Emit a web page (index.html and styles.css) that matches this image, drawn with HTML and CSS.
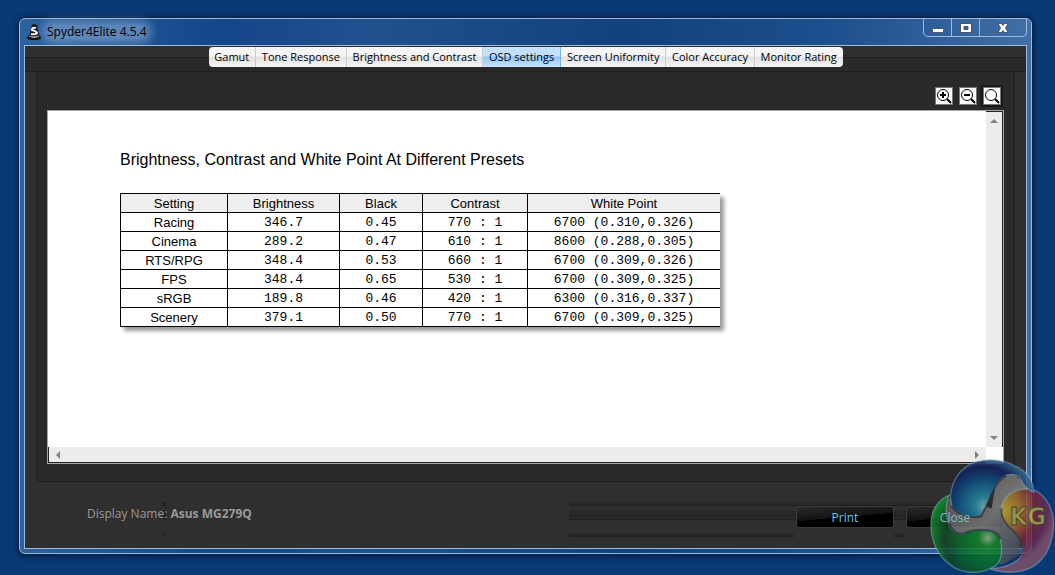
FILE: index.html
```html
<!DOCTYPE html>
<html lang="en">
<head>
  <meta charset="UTF-8">
  <meta name="viewport" content="width=device-width, initial-scale=1.0">
  <title>Spyder4Elite 4.5.4</title>
  <link rel="stylesheet" href="styles.css">
</head>
<body>
  <div class="window">
    <header class="titlebar">
      <svg class="app-icon" width="15" height="17" viewBox="0 0 15 17">
        <path d="M7 0L10 1L11 7L12 10L14 13L14 15L10 16H4L0 15L1 12L3 10L4 4L5 1Z" fill="#111"/>
        <path d="M9 4Q5 3 5 6Q9 7 10 9Q9 11 4 10" fill="none" stroke="#f4f4f4" stroke-width="2"/>
        <path d="M2 12Q7 15 12 12M5 13H10" fill="none" stroke="#b5b5b5"/>
      </svg>
      <h1 class="title">Spyder4Elite 4.5.4</h1>
      <div class="win-buttons">
        <button aria-label="Minimize">
          <svg width="12" height="12" viewBox="0 0 12 12"><rect x=".5" y="6.500" width="11" height="4" rx="1" fill="#fff" stroke="#4b5566"/></svg>
        </button>
        <button aria-label="Maximize">
          <svg width="12" height="12" viewBox="0 0 12 12"><path d="M.5 1.500H11.500V10.500H.5Z M4 4.500V7.500H8V4.500Z" fill="#fff" fill-rule="evenodd" stroke="#4b5566"/></svg>
        </button>
        <button class="win-close" aria-label="Close window">
          <svg width="12" height="12" viewBox="0 0 12 12"><path d="M1 1.500H4.500L6 3.500L7.500 1.500H11L8.500 6L11 10.500H7.500L6 8.500L4.500 10.500H1L3.500 6Z" fill="#fff" stroke="#4b5566"/></svg>
        </button>
      </div>
    </header>

    <main class="client">
      <nav class="tabbar">
        <div class="tabs">
          <button>Gamut</button>
          <button>Tone Response</button>
          <button>Brightness and Contrast</button>
          <button class="active">OSD settings</button>
          <button>Screen Uniformity</button>
          <button>Color Accuracy</button>
          <button>Monitor Rating</button>
        </div>
      </nav>

      <section class="panel">
        <div class="zoom-tools">
          <button aria-label="Zoom in">
            <svg width="16" height="16" viewBox="0 0 16 16"><circle cx="7" cy="7" r="5.500"/><path class="thick" d="M4 7H10M7 4V10M11 11L15 15"/></svg>
          </button>
          <button aria-label="Zoom out">
            <svg width="16" height="16" viewBox="0 0 16 16"><circle cx="7" cy="7" r="5.500"/><path class="thick" d="M4 7H10M11 11L15 15"/></svg>
          </button>
          <button class="focused" aria-label="Fit to view">
            <svg width="16" height="16" viewBox="0 0 16 16"><circle cx="7" cy="7" r="5.500"/><path class="thick" d="M11 11L15 15"/></svg>
          </button>
        </div>

        <div class="viewer">
          <article class="report">
            <h2>Brightness, Contrast and White Point At Different Presets</h2>
            <table>
              <colgroup>
                <col class="col-setting">
                <col class="col-brightness">
                <col class="col-black">
                <col class="col-contrast">
                <col>
              </colgroup>
              <thead>
                <tr><th>Setting</th><th>Brightness</th><th>Black</th><th>Contrast</th><th>White Point</th></tr>
              </thead>
              <tbody>
                <tr><th>Racing</th><td>346.7</td><td>0.45</td><td>770 : 1</td><td>6700 (0.310,0.326)</td></tr>
                <tr><th>Cinema</th><td>289.2</td><td>0.47</td><td>610 : 1</td><td>8600 (0.288,0.305)</td></tr>
                <tr><th>RTS/RPG</th><td>348.4</td><td>0.53</td><td>660 : 1</td><td>6700 (0.309,0.326)</td></tr>
                <tr><th>FPS</th><td>348.4</td><td>0.65</td><td>530 : 1</td><td>6700 (0.309,0.325)</td></tr>
                <tr><th>sRGB</th><td>189.8</td><td>0.46</td><td>420 : 1</td><td>6300 (0.316,0.337)</td></tr>
                <tr><th>Scenery</th><td>379.1</td><td>0.50</td><td>770 : 1</td><td>6700 (0.309,0.325)</td></tr>
              </tbody>
            </table>
          </article>
          <div class="scroll-y">
            <svg width="8" height="4" viewBox="0 0 8 4"><path d="M0 4L4 0L8 4Z"/></svg>
            <svg width="8" height="4" viewBox="0 0 8 4"><path d="M0 0L4 4L8 0Z"/></svg>
          </div>
          <div class="scroll-x">
            <svg width="4" height="8" viewBox="0 0 4 8"><path d="M4 0L0 4L4 8Z"/></svg>
            <svg width="4" height="8" viewBox="0 0 4 8"><path d="M0 0L4 4L0 8Z"/></svg>
          </div>
        </div>
      </section>

      <footer class="footer">
        <p class="display-name">Display Name: <b>Asus MG279Q</b></p>
        <div class="actions">
          <button><span>Print</span></button>
          <button><span>Close</span></button>
        </div>
      </footer>
    </main>
  </div>

  <svg class="watermark" width="130" height="120" viewBox="0 0 390 360">
    <defs>
      <radialGradient id="blue" gradientUnits="userSpaceOnUse" cx="178" cy="155" r="150">
        <stop offset="0" stop-color="#7fb4bd"/>
        <stop offset=".2" stop-color="#2787a4"/>
        <stop offset=".55" stop-color="#0c4c80"/>
        <stop offset=".8" stop-color="#14215c"/>
        <stop offset="1" stop-color="#2f628c"/>
      </radialGradient>
      <radialGradient id="green" gradientUnits="userSpaceOnUse" cx="188" cy="248" r="185">
        <stop offset="0" stop-color="#8fb593"/>
        <stop offset=".15" stop-color="#12862b"/>
        <stop offset=".45" stop-color="#086a2c"/>
        <stop offset=".7" stop-color="#114527"/>
        <stop offset="1" stop-color="#12a22e"/>
      </radialGradient>
      <radialGradient id="red" gradientUnits="userSpaceOnUse" cx="225" cy="165" r="165">
        <stop offset="0" stop-color="#c3b33b"/>
        <stop offset=".4" stop-color="#a06b30"/>
        <stop offset=".65" stop-color="#7a2438"/>
        <stop offset=".85" stop-color="#672a52"/>
        <stop offset="1" stop-color="#7e5068"/>
      </radialGradient>
      <linearGradient id="steel" x1="0" y1="0" x2="1" y2="1">
        <stop offset="0" stop-color="#4a4a4a"/>
        <stop offset=".5" stop-color="#808080"/>
        <stop offset="1" stop-color="#263346"/>
      </linearGradient>
    </defs>
    <path fill="url(#steel)" d="M60 135L78 130L200 160L215 70L262 55L326 105L290 200L285 300L230 330L60 230Z"/>
    <path class="orb" fill="url(#green)" d="M72 120Q16 145 18 215Q22 300 92 340Q155 368 212 332Q238 310 226 252Q220 232 190 226Q145 220 112 238Q85 240 70 205Q55 165 72 120Z"/>
    <path class="orb" fill="url(#red)" d="M288 104Q325 96 350 120Q390 160 385 220Q378 300 325 334Q270 365 196 342Q270 335 290 300Q300 260 262 225Q220 190 228 160Q240 110 288 104Z"/>
    <path class="orb" fill="url(#blue)" d="M76 124Q85 45 153 20Q230 0 295 48Q325 70 326 112Q302 103 289 76Q280 52 244 60Q220 72 200 112Q184 155 168 182Q105 192 80 150Z"/>
    <path class="ridge" d="M244 62Q220 74 200 114Q184 157 168 184Q105 194 80 152"/>
    <path class="ridge" d="M230 160Q222 190 262 225Q300 260 288 300M72 205Q87 240 114 236Q147 220 190 226Q220 232 226 252"/>
    <text x="254" y="209">KG</text>
  </svg>
</body>
</html>
```
FILE: styles.css
```css
* {
  box-sizing: border-box;
}

body {
  margin: 0;
  min-height: 100vh;
  padding: 18px 23px 21px 19px;
  display: flex;
  position: relative;
  background: #0a3a76;
  font-family: "Open Sans", "Noto Sans", sans-serif;
  font-size: 12px;
}

button {
  font: inherit;
  margin: 0;
  padding: 0;
}

/* window frame */

.window {
  flex: 1;
  display: flex;
  flex-direction: column;
  padding: 0 4px 4px;
  border: 1px solid #9dbbdd;
  border-radius: 6px;
  background: linear-gradient(90deg, #2c629f 0%, #14468a 20%, #20518f 35%, #11427f 60%, #1c4f8d 80%, #426fa6 100%);
  box-shadow: 0 0 0 1px #06234b, 0 1px 7px 1px #021a3a;
}

.titlebar {
  display: flex;
  align-items: center;
  height: 26px;
  padding-left: 3px;
}

.title {
  margin: 0 0 0 5px;
  font-size: 12px;
  font-weight: normal;
  color: #000;
  background: rgba(150, 180, 220, 0.5);
  border-radius: 8px;
  box-shadow: 0 0 8px 5px rgba(150, 180, 220, 0.5);
  line-height: 14px;
}

.win-buttons {
  display: flex;
  align-self: flex-start;
  margin-left: auto;
  height: 18px;
  border: 1px solid #9dbbdd;
  border-top: 0;
  border-radius: 0 0 5px 5px;
}

.win-buttons button {
  display: flex;
  align-items: center;
  justify-content: center;
  width: 28px;
  border: 0;
  border-right: 1px solid #9dbbdd;
  background: none;
}

.win-buttons .win-close {
  width: 46px;
  border-right: 0;
}

.client {
  flex: 1;
  display: flex;
  flex-direction: column;
  border: 1px solid #9dbbdd;
  background: #2f2f2f;
}

/* tabs */

.tabbar {
  height: 26px;
  padding-top: 1px;
  background: linear-gradient(#2f2f2f 11px, #1f1f1f 11px 12px, #292929 12px 25px, #1f1f1f 25px);
}

.tabs {
  display: flex;
  max-width: 634px;
  height: 20px;
  margin: 0 auto;
  border-radius: 4px;
  overflow: hidden;
}

.tabs button {
  flex: auto;
  padding-bottom: 2px;
  border: 0;
  border-right: 1px solid #ccc;
  background: linear-gradient(#f5f5f5 45%, #e2e2e2 50%, #f4f4f4);
  color: #000;
  font-size: 11px;
  white-space: nowrap;
}

.tabs button:last-child {
  border-right: 0;
}

.tabs .active {
  background: linear-gradient(#c4e0fc 45%, #8fc4fa 50%, #c8e5ff);
  border-right-color: #7ab4f0;
}

/* report panel */

.panel {
  flex: 1;
  display: flex;
  flex-direction: column;
  margin: 0 11px;
  padding: 15px 10px 17px;
  border: 1px solid #1f1f1f;
  border-top: 0;
  border-radius: 0 0 5px 5px;
  background: #292929;
}

.zoom-tools {
  display: flex;
  justify-content: flex-end;
  gap: 6px;
  margin: 0 3px 5px;
}

.zoom-tools button {
  width: 18px;
  height: 18px;
  border: 1px solid #777;
  background: #fff;
}

.zoom-tools .focused {
  box-shadow: 0 0 0 2px #181818;
}

.zoom-tools svg {
  display: block;
  fill: none;
  stroke: #000;
}

.zoom-tools .thick {
  stroke-width: 2;
}

.viewer {
  flex: 1;
  display: grid;
  grid-template-columns: 1fr 17px;
  grid-template-rows: 1fr 16px;
  border: 1px solid #a5a5a5;
  background: #fff;
}

.scroll-y,
.scroll-x {
  display: flex;
  justify-content: space-between;
  align-items: center;
  background: #ececec;
  fill: #808080;
}

.scroll-y {
  flex-direction: column;
  padding: 7px 0;
  border-top: 1px solid #222;
  border-right: 1px solid #222;
}

.scroll-x {
  padding: 0 7px;
  border-left: 1px solid #222;
  border-bottom: 1px solid #222;
}

.report {
  padding: 40px 0 0 72px;
  font-family: "Liberation Sans", Arial, sans-serif;
  color: #000;
}

.report h2 {
  margin: 0 0 24px;
  font-size: 16px;
  font-weight: normal;
  line-height: 18px;
}

.report table {
  width: 600px;
  table-layout: fixed;
  border-spacing: 0;
  border-top: 1px solid #000;
  box-shadow: 4px 4px 4px rgba(0, 0, 0, 0.4);
  background: #fff;
  font-size: 13px;
  line-height: 16px;
  text-align: center;
}

.report th,
.report td {
  padding: 2px 0 0;
  border-left: 1px solid #000;
  border-bottom: 1px solid #000;
  font-weight: normal;
}

.report thead th {
  background: #eee;
}

.report td {
  font-family: "Liberation Mono", "Courier New", monospace;
}

.col-setting {
  width: 107px;
}

.col-brightness {
  width: 112px;
}

.col-black {
  width: 83px;
}

.col-contrast {
  width: 105px;
}

/* footer */

.footer {
  display: flex;
  justify-content: space-between;
  height: 66px;
  padding: 20px 16px 0 62px;
}

.display-name {
  height: 36px;
  margin: 0;
  padding-top: 4px;
  color: #999;
  line-height: 16px;
  background: linear-gradient(#232323 4px, transparent 4px 8px, #232323 8px 18px, transparent 18px 31px, #232323 31px 35px, transparent 35px) 76px 0 / 3px 36px no-repeat;
}

/* the lowest stripe shows only left of and between the buttons */
.actions {
  display: flex;
  gap: 14px;
  height: 36px;
  padding: 5px 7px 0 228px;
  background:
    linear-gradient(#282828 3px, #1f1f1f 3px 4px, transparent 4px 8px, #282828 8px 13px, #1f1f1f 13px 14px, #282828 14px 17px, #1f1f1f 17px 18px, transparent 18px),
    linear-gradient(#282828 3px, #1f1f1f 3px) 0 31px / 225px 4px no-repeat,
    linear-gradient(#282828 3px, #1f1f1f 3px) 325px 31px / 10px 4px no-repeat;
}

.actions button {
  width: 96px;
  height: 20px;
  border: 0;
  border-radius: 2px;
  background: linear-gradient(175deg, #2b2b2b, #111 50%, #000 50%);
  box-shadow: 0 0 0 1px #3a3a3a;
  color: #62cbe8;
}

/* keeps the labels readable through the watermark */
.actions span {
  position: relative;
  z-index: 1;
}

.actions button:last-child {
  color: #86b9c4;
}

/* site watermark over the corner */

.watermark {
  position: absolute;
  right: 0;
  bottom: 0;
  opacity: 0.85;
  pointer-events: none;
}

.watermark .orb {
  stroke: rgba(150, 200, 215, 0.5);
  stroke-width: 4;
}

.watermark .ridge {
  fill: none;
  stroke: rgba(20, 25, 40, 0.6);
  stroke-width: 6;
}

.watermark text {
  font: bold 76px "Liberation Sans Narrow", "DejaVu Sans Condensed", sans-serif;
  fill: #b3a04a;
  stroke: #4d4a22;
  stroke-width: 3;
}
```
